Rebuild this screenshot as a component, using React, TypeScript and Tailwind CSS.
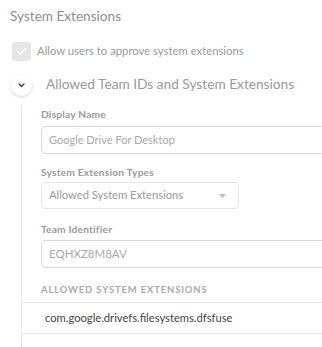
import React from "react";

const font = { fontFamily: "Lato, 'Open Sans', sans-serif" };

function Label({ children }: { children: React.ReactNode }) {
  return (
    <div className="text-[10.2px] leading-[14px] font-bold text-[#9a9a9a] tracking-[0.2px] whitespace-nowrap">
      {children}
    </div>
  );
}

export default function App() {
  return (
    <div
      className="w-[322px] h-[347px] overflow-hidden bg-white"
      style={font}
    >
      <div className="pt-[6px] pl-[10px] text-[13.6px] leading-[20px] text-[#8c8c8c] whitespace-nowrap">
        System Extensions
      </div>

      <div className="mt-[16px] ml-[12px] flex items-center gap-[6px] h-[19px]">
        <div className="w-[19px] h-[19px] rounded-[3px] bg-[#e6e6e6] flex items-center justify-center">
          <svg width="11" height="9" viewBox="0 0 11 9" fill="none">
            <path d="M1.5 4.5 L4.2 7 L9.5 1.5" stroke="#ffffff" strokeWidth="1.4" strokeLinecap="round" strokeLinejoin="round" />
          </svg>
        </div>
        <div className="text-[11.3px] leading-[16px] text-[#9a9a9a] -mt-[2px] whitespace-nowrap">
          Allow users to approve system extensions
        </div>
      </div>

      <div className="mt-[14px] ml-[11px] flex items-center h-[21px]">
        <div className="w-[21px] h-[21px] rounded-full bg-white shadow-[0_1px_3px_rgba(0,0,0,0.18)] flex items-center justify-center">
          <svg width="7" height="5" viewBox="0 0 7 5" fill="none">
            <path d="M1 1 L3.5 3.5 L6 1" stroke="#333" strokeWidth="1.2" strokeLinecap="round" strokeLinejoin="round" />
          </svg>
        </div>
        <div className="ml-[14px] text-[13.7px] leading-[20px] text-[#999999] -mt-[3px] whitespace-nowrap">
          Allowed Team IDs and System Extensions
        </div>
      </div>

      <div className="mt-[9px] ml-[21px] border-l border-[#e6e6e6] pt-[2px] h-[400px]">
        <div className="pl-[19px]">
          <Label>Display Name</Label>
          <div className="mt-[5px] h-[28px] w-[300px] rounded-[4px] border border-[#d9d9d9] flex items-center pl-[7px] text-[11px] text-[#a8a8a8]">
            Google Drive For Desktop
          </div>
          <div className="mt-[11px]">
            <Label>System Extension Types</Label>
          </div>
          <div className="mt-[3px] h-[27px] w-[198px] rounded-[4px] border border-[#e6e6e6] flex items-center justify-between pl-[7px] pr-[12px] text-[11.2px] text-[#9a9a9a]">
            <span>Allowed System Extensions</span>
            <svg width="7" height="4" viewBox="0 0 7 4">
              <path d="M0 0 L7 0 L3.5 4 Z" fill="#bdbdbd" />
            </svg>
          </div>
          <div className="mt-[13px]">
            <Label>Team Identifier</Label>
          </div>
          <div className="mt-[4px] h-[28px] w-[300px] rounded-[4px] border border-[#d9d9d9] flex items-center pl-[7px] text-[11.5px] text-[#a8a8a8]">
            EQHXZ8M8AV
          </div>
          <div className="mt-[15px] text-[9.4px] leading-[14px] font-bold tracking-[0.9px] text-[#a8a8a8] whitespace-nowrap">
            ALLOWED SYSTEM EXTENSIONS
          </div>
        </div>
        <div className="mt-[5px] border-t border-[#e8e8e8] h-[31px] flex items-center pl-[23px] text-[11.2px] text-[#444444]">
          com.google.drivefs.filesystems.dfsfuse
        </div>
        <div className="border-t border-[#e8e8e8]" />
      </div>
    </div>
  );
}
